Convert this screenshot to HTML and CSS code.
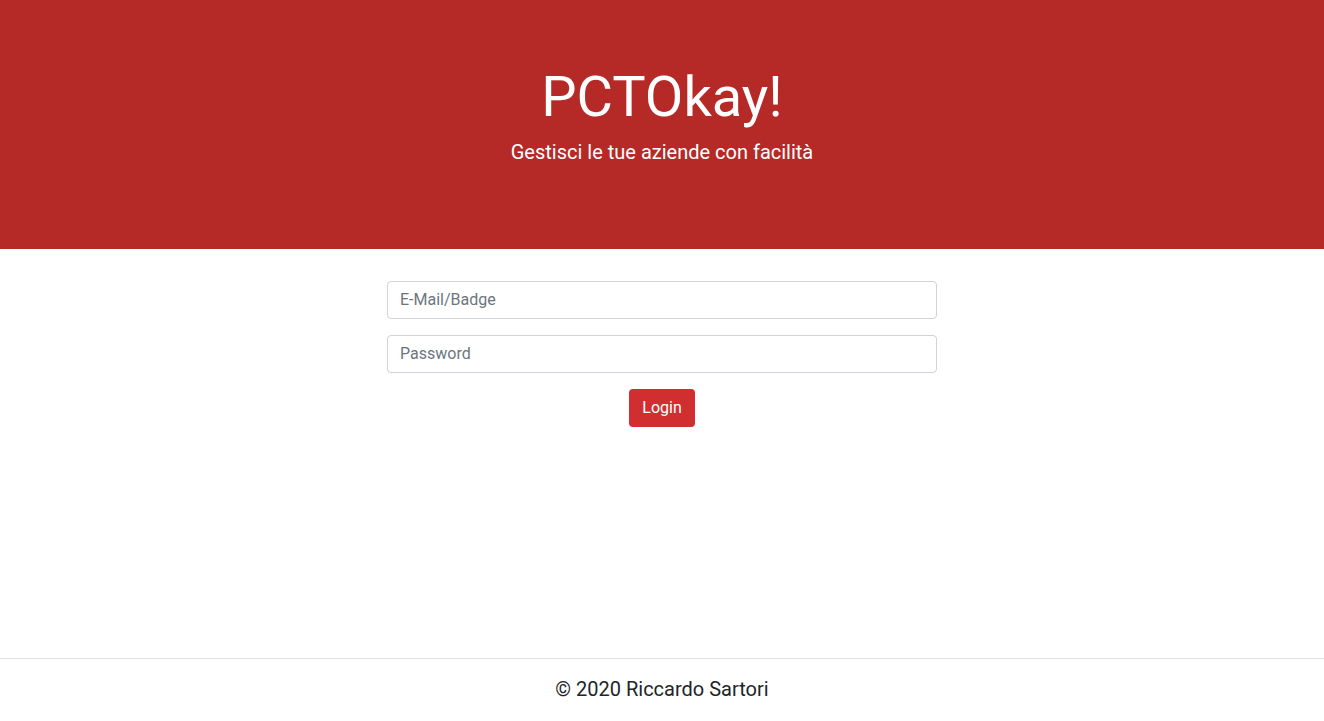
FILE: index.html
```html
<!DOCTYPE html>
<html lang="it">
<head>
<meta charset="utf-8">
<title>PCTOkay!</title>
<link rel="stylesheet" href="styles.css">
</head>
<body>
<div class="page">
  <header class="hero">
    <h1 class="hero-title">PCTOkay!</h1>
    <p class="hero-lead">Gestisci le tue aziende con facilità</p>
  </header>
  <main class="main">
    <form class="login-form">
      <input class="field" type="text" placeholder="E-Mail/Badge">
      <input class="field" type="password" placeholder="Password">
      <button class="btn-login" type="button">Login</button>
    </form>
  </main>
  <footer class="footer">© 2020 Riccardo Sartori</footer>
</div>
</body>
</html>
```
FILE: styles.css
```css
* { box-sizing: border-box; }
html, body { margin: 0; padding: 0; }
body {
  font-family: Roboto, "Liberation Sans", sans-serif;
  color: #212529;
  background: #fff;
}
.page {
  min-height: 100vh;
  display: flex;
  flex-direction: column;
}
.hero {
  height: 249px;
  background: #b52926;
  color: #fff;
  display: flex;
  flex-direction: column;
  align-items: center;
  padding-top: 64px;
}
.hero-title {
  margin: 0;
  font-size: 56px;
  font-weight: 400;
  line-height: 67px;
}
.hero-lead {
  margin: 6px 0 0;
  font-size: 20px;
  font-weight: 400;
  line-height: 30px;
}
.main {
  flex: 1;
  display: flex;
  justify-content: center;
  padding-top: 32px;
}
.login-form {
  width: 550px;
  display: flex;
  flex-direction: column;
  align-items: center;
  gap: 16px;
}
.field {
  width: 100%;
  height: 38px;
  border: 1px solid #ced4da;
  border-radius: 4px;
  padding: 5px 12px 7px;
  font-family: inherit;
  font-size: 16px;
  line-height: 24px;
  color: #495057;
}
.field::placeholder { color: #6c757d; }
.btn-login {
  height: 38px;
  padding: 0 13px 2px;
  border: none;
  border-radius: 4px;
  background: #d12f2f;
  color: #fff;
  font-family: inherit;
  font-size: 16px;
}
.footer {
  height: 63px;
  border-top: 1px solid #dee2e6;
  display: flex;
  align-items: center;
  justify-content: center;
  padding-bottom: 2px;
  font-size: 20px;
  color: #212529;
}
```
